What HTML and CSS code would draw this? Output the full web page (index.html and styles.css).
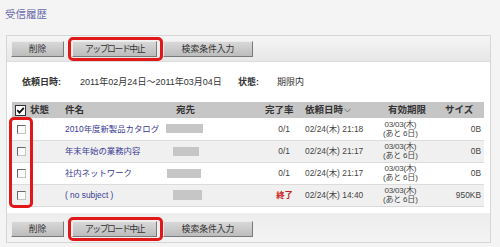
FILE: index.html
```html
<!DOCTYPE html>
<html lang="ja">
<head>
<meta charset="utf-8">
<link rel="stylesheet" href="styles.css">
</head>
<body>
<div class="title">受信履歴</div>
<div class="panel">
  <div class="toolbar">
    <span class="btn w1">削除</span><span class="btn w2 hl"><span class="narrow">アップロード中止</span></span><span class="btn w3">検索条件入力</span>
  </div>
  <div class="filter">
    <span class="lbl l1">依頼日時:</span><span class="v1">2011年02月24日～2011年03月04日</span><span class="lbl l2">状態:</span><span>期限内</span>
  </div>
  <div class="tablewrap">
    <table>
      <colgroup>
        <col class="c1"><col class="c2"><col class="c3"><col class="c4"><col class="c5"><col class="c6"><col class="c7">
      </colgroup>
      <thead>
        <tr>
          <th class="h1"><svg class="chk" width="11" height="11" viewBox="0 0 11 11"><rect x="0.5" y="0.5" width="10" height="10" fill="#fff" stroke="#333"/><path d="M2.3 5.2 L4.5 7.6 L8.8 2.8" fill="none" stroke="#111" stroke-width="1.8"/></svg><span class="st">状態</span></th>
          <th class="h2">件名</th>
          <th class="h3">宛先</th>
          <th class="h4">完了率</th>
          <th class="h5">依頼日時<svg class="chev" width="7" height="5" viewBox="0 0 7 5"><path d="M0.5 0.8 L3.5 4 L6.5 0.8" fill="none" stroke="#777" stroke-width="1"/></svg></th>
          <th class="h6">有効期限</th>
          <th class="h7">サイズ</th>
        </tr>
      </thead>
      <tbody>
        <tr>
          <td><span class="cb"></span></td>
          <td class="subj">2010年度新製品カタログ</td>
          <td><span class="blk b1"></span></td>
          <td class="rate">0/1</td>
          <td class="date">02/24(木) 21:18</td>
          <td class="exp"><span class="expin">03/03(木)<br>(あと 6日)</span></td>
          <td class="size">0B</td>
        </tr>
        <tr class="alt">
          <td><span class="cb"></span></td>
          <td class="subj">年末年始の業務内容</td>
          <td><span class="blk b2"></span></td>
          <td class="rate">0/1</td>
          <td class="date">02/24(木) 21:17</td>
          <td class="exp"><span class="expin">03/03(木)<br>(あと 6日)</span></td>
          <td class="size">0B</td>
        </tr>
        <tr>
          <td><span class="cb"></span></td>
          <td class="subj">社内ネットワーク</td>
          <td><span class="blk b3"></span></td>
          <td class="rate">0/1</td>
          <td class="date">02/24(木) 21:17</td>
          <td class="exp"><span class="expin">03/03(木)<br>(あと 6日)</span></td>
          <td class="size">0B</td>
        </tr>
        <tr class="alt">
          <td><span class="cb"></span></td>
          <td class="subj">( no subject )</td>
          <td><span class="blk b4"></span></td>
          <td class="rate done">終了</td>
          <td class="date">02/24(木) 14:40</td>
          <td class="exp"><span class="expin">03/03(木)<br>(あと 6日)</span></td>
          <td class="size">950KB</td>
        </tr>
      </tbody>
    </table>
    <div class="mark"></div>
  </div>
  <div class="toolbar bottom">
    <span class="btn w1">削除</span><span class="btn w2 hl"><span class="narrow">アップロード中止</span></span><span class="btn w3">検索条件入力</span>
  </div>
</div>
</body>
</html>
```

FILE: styles.css
```css
html, body {
  margin: 0;
  padding: 0;
}
body {
  width: 500px;
  height: 247px;
  overflow: hidden;
  background: #f4f4f4;
  font-family: "Liberation Sans", "Noto Sans CJK JP", sans-serif;
  font-size: 9px;
  color: #333;
}
.title {
  height: 35px;
  box-sizing: border-box;
  padding: 8px 0 0 5px;
  font-size: 10.5px;
  line-height: 12px;
  color: #6a6aaa;
}
.panel {
  margin-left: 6px;
  width: 485px;
  box-sizing: border-box;
  border: 1px solid #d6d6d6;
  background: #fff;
}
.toolbar {
  display: flex;
  padding: 5px 0 4px 4px;
  background: linear-gradient(#f5f5f5, #e7e7e7);
  border-bottom: 1px solid #dcdcdc;
}
.toolbar.bottom {
  margin-top: 6px;
  padding: 8px 0 5px 4px;
  border-bottom: 0;
  background: linear-gradient(#ededed, #f3f3f3);
}
.btn {
  position: relative;
  box-sizing: border-box;
  height: 16px;
  display: flex;
  align-items: center;
  justify-content: center;
  background: linear-gradient(#d8d8d8, #bcbcbc);
  border: 1px solid;
  border-color: #ececec #7a7a7a #7a7a7a #ececec;
  color: #333;
  font-size: 8.8px;
  line-height: 10px;
  margin-right: 8px;
}
.w1 { width: 53px; }
.w2 { width: 85px; margin-right: 6px; }
.w3 { width: 90px; }
.narrow { letter-spacing: -1.4px; }
.hl::after {
  content: "";
  position: absolute;
  top: -5px;
  left: -5px;
  right: -7px;
  bottom: -5px;
  border: 3px solid #e01818;
  border-radius: 5px;
}
.filter {
  height: 40px;
  display: flex;
  align-items: center;
  padding-left: 15px;
  font-size: 9px;
  line-height: 10px;
}
.lbl { font-weight: bold; }
.l1 { width: 58px; }
.v1 { width: 158px; }
.l2 { width: 39px; }
.tablewrap {
  position: relative;
  margin-left: 5px;
  width: 472px;
}
table {
  border-collapse: collapse;
  table-layout: fixed;
  width: 472px;
}
.c1 { width: 48px; }
.c2 { width: 106px; }
.c3 { width: 94px; }
.c4 { width: 40px; }
.c5 { width: 83px; }
.c6 { width: 54px; }
.c7 { width: 47px; }
th, td {
  padding: 0;
  white-space: nowrap;
  vertical-align: middle;
  text-align: left;
}
thead tr { height: 16px; }
th {
  background: #c6c6c6;
  font-weight: bold;
  font-size: 9.5px;
  line-height: 10px;
  color: #333;
}
.h1 { padding-left: 3px; }
.chk { vertical-align: middle; }
.st { margin-left: 4px; vertical-align: middle; }
.h2 { padding-left: 5px; }
.h3 { padding-left: 10px; }
.h4 { padding-left: 5px; }
.h5 { padding-left: 5px; }
.chev { margin-left: 1px; vertical-align: middle; }
.h6 { padding-left: 5px; }
.h7 { padding-left: 8px; }
tbody tr { height: 22px; }
tbody td {
  border-bottom: 1px solid #dcdcdc;
  font-size: 8.4px;
  line-height: 10px;
  color: #444;
}
tbody tr.alt td { background: #f0f0f0; }
.cb {
  display: inline-block;
  box-sizing: border-box;
  width: 9px;
  height: 9px;
  margin-left: 5px;
  vertical-align: middle;
  border: 1px solid;
  border-color: #6a6a6a #c4c4c4 #c4c4c4 #6a6a6a;
  background: #fbfbfb;
}
td.subj {
  padding-left: 5px;
  color: #3a3a94;
}
.blk {
  display: block;
  height: 9px;
  background: #c6c6c6;
}
.b1 { width: 37px; }
.b2 { width: 26px; margin-left: 7px; }
.b3 { width: 34px; margin-left: 1px; }
.b4 { width: 29px; margin-left: 7px; height: 10px; }
td.rate {
  text-align: right;
  padding-right: 10px;
}
td.done {
  padding-right: 7px;
  color: #cc2020;
  font-weight: bold;
}
td.date { padding-left: 5px; }
td.exp {
  font-size: 8px;
  line-height: 9px;
}
.expin {
  display: inline-block;
  text-align: center;
  letter-spacing: -0.2px;
}
td.size {
  text-align: right;
  padding-right: 3px;
}
.mark {
  position: absolute;
  left: -3px;
  top: 15px;
  width: 24px;
  height: 91px;
  box-sizing: border-box;
  border: 3px solid #e01818;
  border-radius: 5px;
}
```
